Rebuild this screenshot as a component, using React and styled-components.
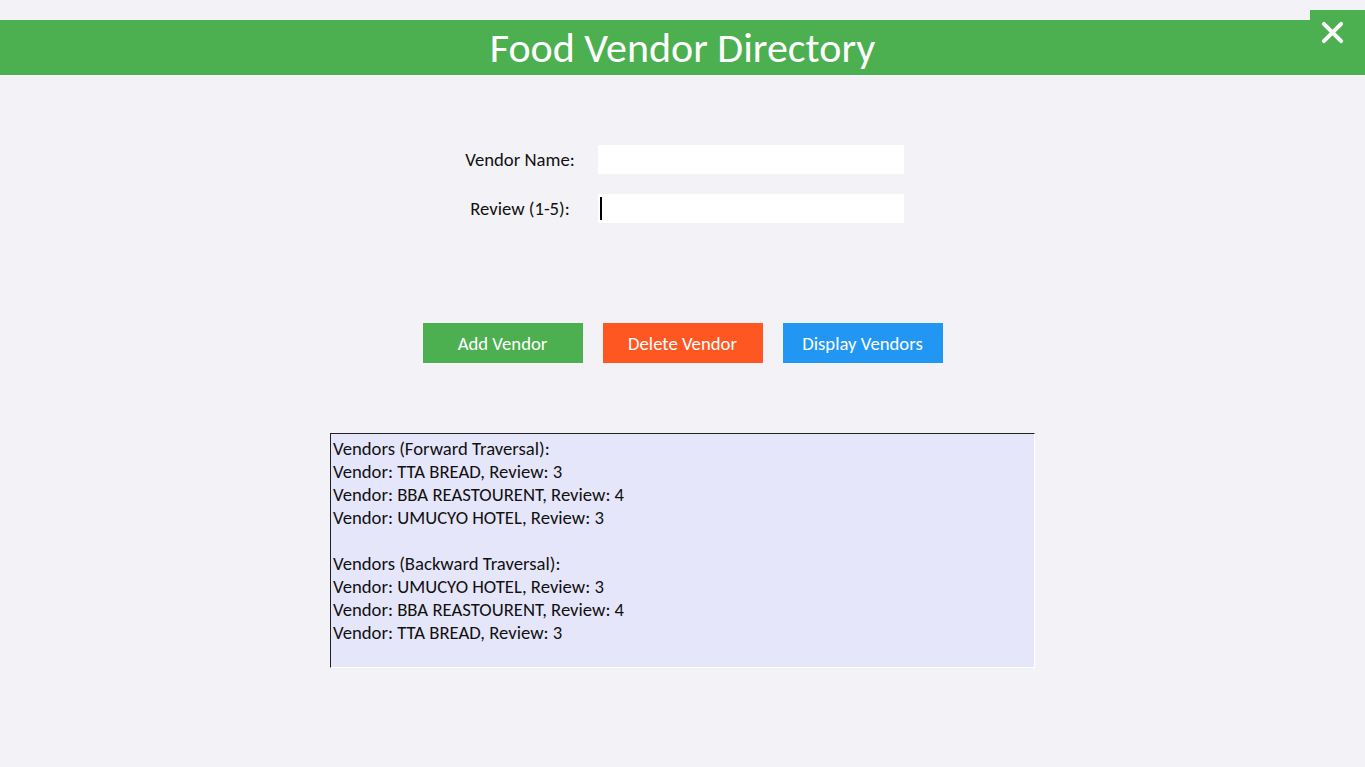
import React from 'react'
import styled, { createGlobalStyle } from 'styled-components'

const Global = createGlobalStyle`
  body {
    margin: 0;
    background: #f3f3f7;
    font-family: Carlito, Calibri, "Noto Sans", "Liberation Sans", sans-serif;
  }
`

const Page = styled.div`
  min-height: 767px;
  padding-top: 20px;
  box-sizing: border-box;
  position: relative;
`

const Header = styled.h1`
  margin: 0;
  height: 55px;
  background: #4caf50;
  color: #fff;
  font-weight: 400;
  font-size: 42px;
  line-height: 55px;
  text-align: center;
`

const CloseButton = styled.button`
  position: absolute;
  top: 10px;
  right: 0;
  width: 55px;
  height: 65px;
  border: 0;
  padding: 11px 11px 0 0;
  background: #4caf50;
  display: flex;
  justify-content: center;
  align-items: flex-start;
  cursor: pointer;
`

const Form = styled.div`
  display: grid;
  grid-template-columns: 150px 306px;
  column-gap: 3px;
  row-gap: 20px;
  justify-content: center;
  padding-right: 16px;
  margin-top: 70px;
  align-items: center;
`

const Label = styled.label`
  font-size: 18.7px;
  color: #111;
  text-align: center;
`

const Field = styled.div`
  position: relative;
  height: 29px;
`

const Input = styled.input`
  width: 100%;
  height: 100%;
  box-sizing: border-box;
  border: 0;
  outline: none;
  background: #fff;
  font: inherit;
  font-size: 18.7px;
  padding: 0 3px;
  caret-color: transparent;
`

const Caret = styled.span`
  position: absolute;
  left: 2px;
  top: 3px;
  width: 2px;
  height: 23px;
  background: #000;
`

const Buttons = styled.div`
  display: flex;
  justify-content: center;
  gap: 20px;
  margin-top: 100px;
`

const Button = styled.button`
  width: 160px;
  height: 40px;
  border: 0;
  padding: 0;
  background: ${p => p.$bg};
  color: #fff;
  font-family: inherit;
  font-size: 18.7px;
  cursor: pointer;
`

const Output = styled.div`
  width: 705px;
  height: 235px;
  margin: 70px auto 0;
  box-sizing: border-box;
  background: #e6e6fa;
  border-top: 1px solid #222;
  border-left: 1px solid #222;
  border-right: 1px solid #fff;
  border-bottom: 1px solid #fff;
  padding: 3px 2px;
  font-size: 18.7px;
  line-height: 23px;
  color: #111;
  white-space: pre;
`

const lines = [
  'Vendors (Forward Traversal):',
  'Vendor: TTA BREAD, Review: 3',
  'Vendor: BBA REASTOURENT, Review: 4',
  'Vendor: UMUCYO HOTEL, Review: 3',
  '',
  'Vendors (Backward Traversal):',
  'Vendor: UMUCYO HOTEL, Review: 3',
  'Vendor: BBA REASTOURENT, Review: 4',
  'Vendor: TTA BREAD, Review: 3',
]

export default function App() {
  return (
    <Page>
      <Global />
      <Header>Food Vendor Directory</Header>
      <CloseButton aria-label="Close">
        <svg width="23" height="23" viewBox="0 0 24 24">
          <path d="M3 3 L21 21 M21 3 L3 21" stroke="#fff" strokeWidth="4.2" strokeLinecap="round" />
        </svg>
      </CloseButton>
      <Form>
        <Label>Vendor Name:</Label>
        <Field><Input /></Field>
        <Label>Review (1-5):</Label>
        <Field><Input /><Caret /></Field>
      </Form>
      <Buttons>
        <Button $bg="#4caf50">Add Vendor</Button>
        <Button $bg="#ff5722">Delete Vendor</Button>
        <Button $bg="#2196f3">Display Vendors</Button>
      </Buttons>
      <Output>{lines.join('\n')}</Output>
    </Page>
  )
}
